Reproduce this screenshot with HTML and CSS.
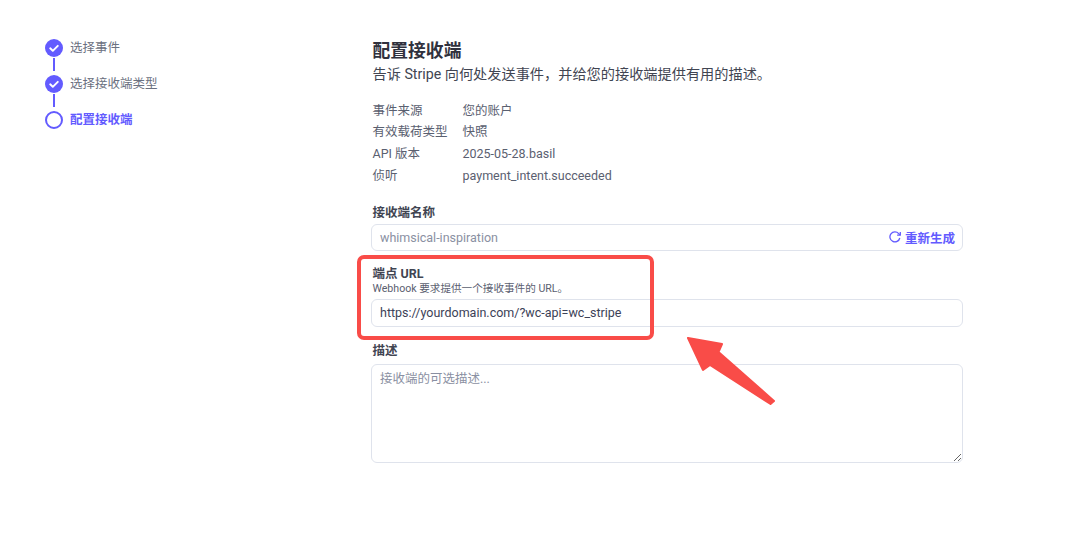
FILE: index.html
```html
<!DOCTYPE html>
<html lang="zh-CN">
<head>
<meta charset="utf-8">
<title>配置接收端</title>
<link rel="stylesheet" href="styles.css">
</head>
<body>
<div class="page">
  <nav class="steps">
    <div class="step done">
      <svg class="step-icon" viewBox="0 0 18 18"><circle cx="9" cy="9" r="9" fill="#635bff"/><path d="M5.200 9.300l2.600 2.500 5-5" fill="none" stroke="#fff" stroke-width="1.900" stroke-linecap="round" stroke-linejoin="round"/></svg>
      <span class="step-label">选择事件</span>
    </div>
    <div class="connector"></div>
    <div class="step done">
      <svg class="step-icon" viewBox="0 0 18 18"><circle cx="9" cy="9" r="9" fill="#635bff"/><path d="M5.200 9.300l2.600 2.500 5-5" fill="none" stroke="#fff" stroke-width="1.900" stroke-linecap="round" stroke-linejoin="round"/></svg>
      <span class="step-label">选择接收端类型</span>
    </div>
    <div class="connector"></div>
    <div class="step current">
      <svg class="step-icon" viewBox="0 0 18 18"><circle cx="9" cy="9" r="8" fill="none" stroke="#635bff" stroke-width="2"/></svg>
      <span class="step-label">配置接收端</span>
    </div>
  </nav>
  <main class="main">
    <h1 class="title">配置接收端</h1>
    <p class="subtitle">告诉 Stripe 向何处发送事件，并给您的接收端提供有用的描述。</p>
    <dl class="meta">
      <div class="meta-row"><dt>事件来源</dt><dd>您的账户</dd></div>
      <div class="meta-row"><dt>有效载荷类型</dt><dd>快照</dd></div>
      <div class="meta-row"><dt>API 版本</dt><dd>2025-05-28.basil</dd></div>
      <div class="meta-row"><dt>侦听</dt><dd>payment_intent.succeeded</dd></div>
    </dl>
    <section class="field field-name">
      <div class="label">接收端名称</div>
      <div class="input">
        <span class="placeholder">whimsical-inspiration</span>
        <span class="regen">
          <svg class="regen-icon" viewBox="0 0 12 12"><path d="M10.800 7A5 5 0 1 1 9.700 2.600L11 3.900" fill="none" stroke="#635bff" stroke-width="1.300"/><path d="M11.300 1v3.200H8.100" fill="none" stroke="#635bff" stroke-width="1.300"/></svg>
          重新生成
        </span>
      </div>
    </section>
    <section class="field field-url">
      <div class="label">端点 URL</div>
      <div class="hint">Webhook 要求提供一个接收事件的 URL。</div>
      <div class="input"><span class="value">https://yourdomain.com/?wc-api=wc_stripe</span></div>
    </section>
    <section class="field field-desc">
      <div class="label">描述</div>
      <textarea class="textarea" placeholder="接收端的可选描述..."></textarea>
    </section>
  </main>
</div>
<div class="highlight"></div>
<svg class="arrow" viewBox="0 0 100 75"><path d="M8 8 42 14 38.500 22 94 71 90.500 74 30 35 23 40Z" fill="#f94c48" stroke="#f94c48" stroke-width="2" stroke-linejoin="round"/></svg>
</body>
</html>
```
FILE: styles.css
```css
* { box-sizing: border-box; }
html, body { margin: 0; padding: 0; background: #fff; }
body {
  width: 1083px;
  height: 537px;
  overflow: hidden;
  position: relative;
  font-family: Roboto, "Noto Sans CJK SC", sans-serif;
  color: #414552;
}
.page { display: flex; padding: 39px 0 0 45px; }
.steps { width: 326px; flex: none; display: flex; flex-direction: column; }
.step { display: flex; align-items: center; gap: 7px; height: 18px; font-size: 12.500px; color: #6a7080; }
.step-label { line-height: 16px; }
.step-icon { width: 18px; height: 18px; flex: none; }
.step.current { color: #635bff; font-weight: 700; }
.connector { width: 2px; height: 13px; margin: 1px 0 4px 8px; background: #635bff; }
.main { width: 592px; margin-top: -1px; }
.title { margin: 2px 0 0 1.500px; font-size: 17.800px; line-height: 22px; font-weight: 700; color: #30313d; }
.subtitle { margin: 2px 0 0 1.500px; font-size: 14.200px; line-height: 20px; color: #414552; }
.meta { margin: 15.500px 0 0 1.500px; font-size: 12.500px; color: #5a6070; }
.meta-row { display: flex; height: 21.700px; line-height: 21.700px; }
.meta-row dt { width: 90px; }
.meta-row dd { margin: 0; }
.label { font-size: 12.500px; line-height: 16px; font-weight: 700; color: #414552; margin-left: 1.500px; }
.field-name { margin-top: 18.500px; }
.field-url { margin-top: 15px; }
.field-desc { margin-top: 16px; }
.hint { font-size: 10.600px; line-height: 14px; color: #5a6070; margin: 0 0 3px 1.500px; }
.input {
  display: flex;
  align-items: center;
  justify-content: space-between;
  height: 27px;
  margin-top: 3px;
  padding: 0 7px 0 8px;
  border: 1px solid #dfe3ec;
  border-radius: 6px;
  font-size: 12.500px;
}
.hint + .input { margin-top: 3px; height: 28px; }
.placeholder { color: #8a90a2; }
.value { color: #3c4257; }
.regen { display: flex; align-items: center; gap: 4px; font-weight: 700; color: #635bff; }
.regen-icon { width: 12px; height: 12px; }
.textarea {
  display: block;
  width: 100%;
  height: 99px;
  margin-top: 5px;
  padding: 6px 8px;
  border: 1px solid #dfe3ec;
  border-radius: 6px;
  font: 12.500px/16px Roboto, "Noto Sans CJK SC", sans-serif;
  background: #fff;
}
.textarea::placeholder { color: #8a90a2; opacity: 1; }
.highlight {
  position: absolute;
  left: 357px;
  top: 255px;
  width: 297px;
  height: 85px;
  border: 4px solid #f94c48;
  border-radius: 7px;
}
.arrow { position: absolute; left: 680px; top: 330px; width: 100px; height: 75px; }
```
